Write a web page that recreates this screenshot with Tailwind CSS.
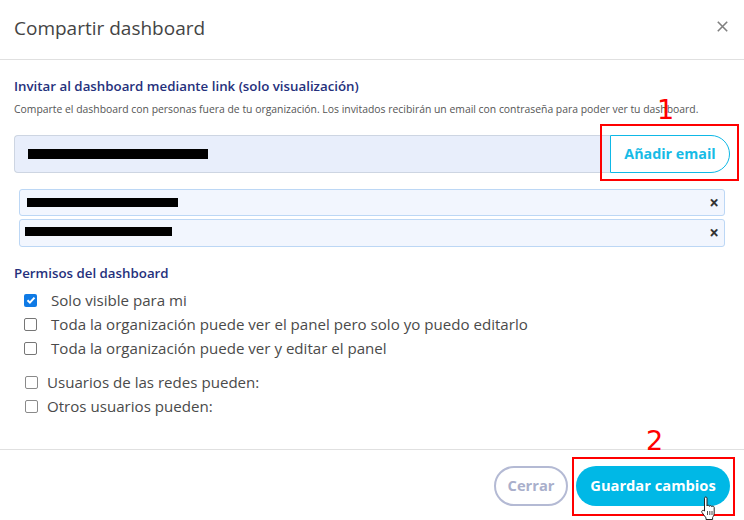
<!doctype html>
<html>
<head>
  <meta charset="UTF-8" />
  <title>Compartir dashboard</title>
  <script src="https://cdn.jsdelivr.net/npm/@tailwindcss/browser@4"></script>
</head>
<body class="bg-white">
<div class="relative w-[744px] h-[520px] overflow-hidden bg-white font-['Open_Sans',sans-serif] text-[#4a4a4a]">
  <!-- Header -->
  <header class="h-[60px] border-b border-[#e0e0e0] flex items-center justify-between pl-[14px] pr-[16px] pb-[2px]">
    <h1 class="text-[19px] text-[#444] leading-none">Compartir dashboard</h1>
    <svg class="w-[11px] h-[11px] mb-[4px] text-[#808080]" viewBox="0 0 11 11" fill="none" stroke="currentColor" stroke-width="1.6"><path d="M.8.8l9.400 9.400M10.200.8L.8 10.200"/></svg>
  </header>

  <!-- Invite -->
  <section class="pl-[14px] pr-[14px] pt-[17px]">
    <h2 class="text-[13.3px] leading-[18px] font-semibold text-[#25307c]">Invitar al dashboard mediante link (solo visualización)</h2>
    <p class="mt-[7px] text-[10.4px] leading-[14px] text-[#555] whitespace-nowrap">Comparte el dashboard con personas fuera de tu organización. Los invitados recibirán un email con contraseña para poder ver tu dashboard.</p>
    <div class="mt-[19px] flex h-[38px]">
      <div class="flex-1 bg-[#e8eefb] border border-[#cdd5e2] rounded-l-[4px] border-r-0 flex items-center pl-[13px]">
        <span class="block w-[180px] h-[10px] bg-black"></span>
      </div>
      <div class="w-[10px] bg-[#e8eefb] border-y border-[#cdd5e2] -ml-px"></div>
      <button class="w-[120px] h-[38px] bg-white border border-[#0fb8e6] rounded-r-[19px] text-[#17bbe6] text-[14.3px] font-bold">Añadir email</button>
    </div>
    <div class="mt-[16px] ml-[5px] w-[706px] flex flex-col gap-[3px]">
      <div class="h-[27px] bg-[#f2f6fe] border border-[#bcd7f5] rounded-[3px] flex items-center justify-between pl-[7px] pr-[5px]">
        <span class="block w-[151px] h-[9px] mb-[1px] bg-black"></span>
        <span class="text-[17px] font-bold text-[#333] leading-none">×</span>
      </div>
      <div class="h-[28px] bg-[#f2f6fe] border border-[#bcd7f5] rounded-[3px] flex items-center justify-between pl-[5px] pr-[5px]">
        <span class="block w-[147px] h-[9px] mb-[3px] bg-black"></span>
        <span class="text-[17px] font-bold text-[#333] leading-none mb-[1px]">×</span>
      </div>
    </div>
  </section>

  <!-- Permisos -->
  <section class="pl-[14px] pt-[17px]">
    <h2 class="text-[13.3px] leading-[18px] font-semibold text-[#25307c]">Permisos del dashboard</h2>
    <div class="mt-[8px] pl-[10px] flex flex-col gap-[4px] text-[15.1px] text-[#4a4a4a]">
      <label class="h-[20px] flex items-center gap-[14px]">
        <span class="w-[13px] h-[13px] rounded-[2px] bg-[#0f7ae5] flex items-center justify-center">
          <svg class="w-[10px] h-[10px]" viewBox="0 0 10 10" fill="none" stroke="white" stroke-width="2"><path d="M1.500 5.200l2.400 2.400 4.600-5"/></svg>
        </span>
        Solo visible para mi
      </label>
      <label class="h-[20px] flex items-center gap-[14px]">
        <span class="w-[13px] h-[13px] rounded-[2px] bg-white border border-[#767676]"></span>
        Toda la organización puede ver el panel pero solo yo puedo editarlo
      </label>
      <label class="h-[20px] flex items-center gap-[14px]">
        <span class="w-[13px] h-[13px] rounded-[2px] bg-white border border-[#767676]"></span>
        Toda la organización puede ver y editar el panel
      </label>
    </div>
    <div class="mt-[14px] pl-[11px] flex flex-col gap-[4px] text-[15.1px] text-[#4a4a4a]">
      <label class="h-[20px] flex items-center gap-[9px]">
        <span class="w-[13px] h-[13px] rounded-[2px] bg-white border border-[#8a8a8a]"></span>
        Usuarios de las redes pueden:
      </label>
      <label class="h-[20px] flex items-center gap-[9px]">
        <span class="w-[13px] h-[13px] rounded-[2px] bg-white border border-[#8a8a8a]"></span>
        Otros usuarios pueden:
      </label>
    </div>
  </section>

  <!-- Footer -->
  <footer class="absolute left-0 top-[449px] w-full h-[71px] border-t border-[#e0e0e0] flex justify-end gap-[8px] pt-[16px] pr-[14px]">
    <button class="w-[74px] h-[40px] pb-[2px] rounded-[20px] border-2 border-[#b4bad4] bg-white text-[#a9afcb] text-[14.7px] font-bold">Cerrar</button>
    <button class="w-[154px] h-[40px] pb-[2px] rounded-[20px] bg-[#00b8e6] text-white text-[14.7px] font-bold">Guardar cambios</button>
  </footer>

  <!-- Annotations over the screenshot -->
  <div class="absolute left-[600px] top-[124px] w-[139px] h-[57px] border-2 border-[#f00]"></div>
  <div class="absolute left-[572px] top-[457px] w-[163px] h-[59px] border-2 border-[#f00]"></div>
  <span class="absolute left-[657px] top-[94px] text-[27px] leading-[32px] text-[#f00] font-['DejaVu_Sans',sans-serif]">1</span>
  <span class="absolute left-[646px] top-[425px] text-[27px] leading-[32px] text-[#f00] font-['DejaVu_Sans',sans-serif]">2</span>

  <!-- Hand cursor -->
  <svg class="absolute left-[700px] top-[496px] w-[18px] h-[25px]" viewBox="0 0 18 25" fill="white" stroke="#222" stroke-width="1" stroke-linejoin="round">
    <path d="M4.500 14V2.200c0-1.600 2.500-1.600 2.500 0V10c0-1 2.400-1 2.400.3 0-1 2.400-1 2.400.4 0-.9 2.400-.7 2.400.8v5.500c0 2.200-1 3.400-1.600 4.500v2H6v-1.600c-1-1.600-2.600-3.400-4-5.400-1-1.600 1-3 2.500-1.500z"/>
    <path d="M7.500 15v4M9.800 15v4M12 15v4" fill="none" stroke-width=".8"/>
  </svg>
</div>
</body>
</html>
